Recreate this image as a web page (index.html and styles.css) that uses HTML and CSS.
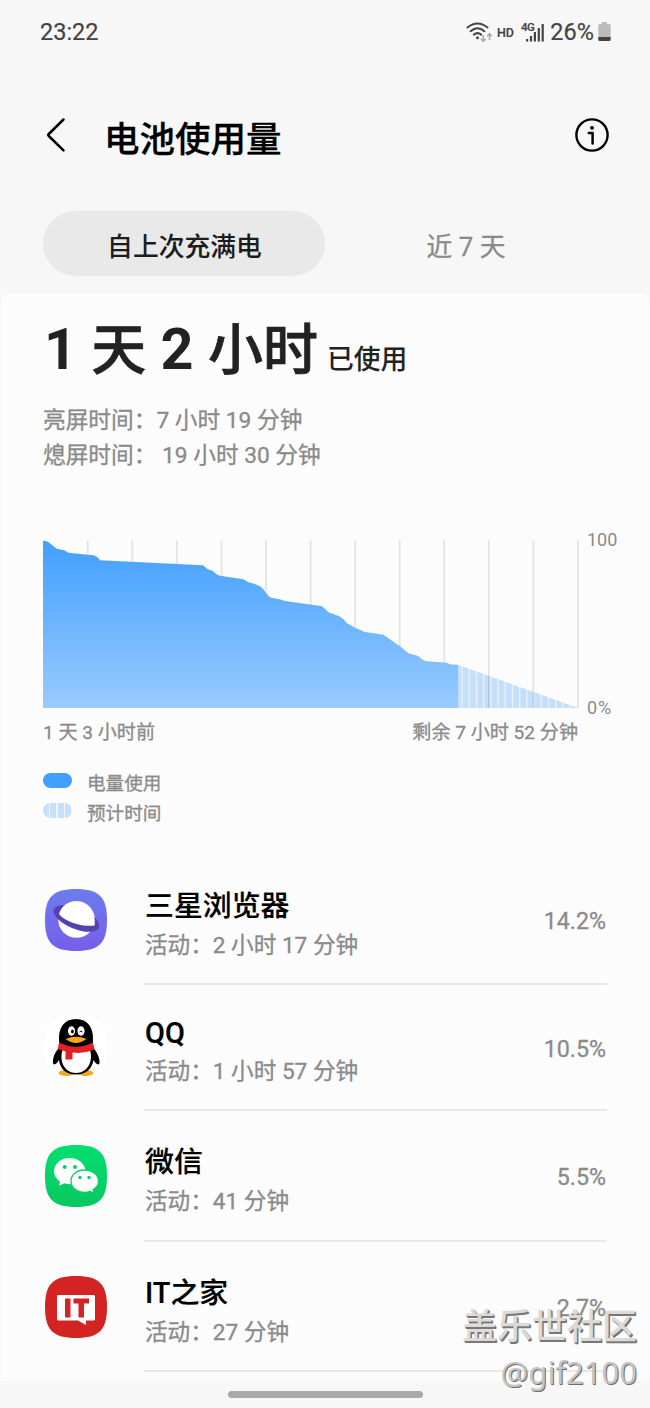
FILE: index.html
```
<!DOCTYPE html>
<html lang="zh-CN">
<head>
    <meta charset="UTF-8">
    <meta name="viewport" content="width=device-width, initial-scale=1.0">
    <title>电池使用量</title>
    <link rel="stylesheet" href="styles.css">
</head>
<body>
    <div class="status-bar">
        <span class="clock">23:22</span>
        <div class="status-icons">
            <svg class="wifi" width="27" height="22" viewBox="0 0 27 22">
                <g fill="none" stroke="#444" stroke-width="2" stroke-linecap="round">
                    <path d="M1.5 6.5Q11.5-1.5 21.5 6.5"/>
                    <path d="M4.6 10.2Q11.5 4.4 18.4 10.2"/>
                    <path d="M7.8 13.6Q11.5 10.6 15.2 13.6"/>
                </g>
                <circle cx="11.5" cy="16.8" r="1.5" fill="#444"/>
                <path d="M17.3 14v6M14.9 17.8l2.4 2.6 2.4-2.6M23.5 19v-6M21.1 15.2l2.4-2.6 2.4 2.6" fill="none" stroke="#aaa" stroke-width="1.5"/>
            </svg>
            <span class="hd">HD</span>
            <span class="net">4G</span>
            <svg class="signal" width="18" height="18" viewBox="0 0 18 18" fill="#444">
                <rect x="0" y="15" width="2.2" height="2.5"/>
                <rect x="3.9" y="12" width="2.2" height="5.5"/>
                <rect x="7.8" y="8" width="2.2" height="9.5"/>
                <rect x="11.7" y="4" width="2.2" height="13.5"/>
                <rect x="15.6" y="0" width="2.2" height="17.5"/>
            </svg>
            <span class="percent">26%</span>
            <svg class="battery" width="13" height="20" viewBox="0 0 13 20">
                <path d="M4 0h5v2h2q1.7 0 1.7 1.7V15H.3V3.7Q.3 2 2 2h2z" fill="#bbb"/>
                <path d="M.3 15h12.4v2.5q0 1.5-1.5 1.5H1.8Q.3 19 .3 17.5z" fill="#444"/>
            </svg>
        </div>
    </div>

    <header class="header">
        <svg class="back" width="20" height="36" viewBox="0 0 20 36">
            <path d="M17.5 2.5L2.8 17q-1 1 0 2L17.5 33.3" fill="none" stroke="#000" stroke-width="2.5" stroke-linecap="round"/>
        </svg>
        <h1>电池使用量</h1>
        <svg class="info" width="34" height="34" viewBox="0 0 34 34">
            <circle cx="17" cy="17" r="15.6" fill="none" stroke="#000" stroke-width="2.4"/>
            <circle cx="17" cy="9.8" r="1.9"/>
            <path d="M13.8 15h3.8v10.6" fill="none" stroke="#000" stroke-width="2.5" stroke-linecap="round" stroke-linejoin="round"/>
        </svg>
    </header>

    <nav class="tabs">
        <a class="tab active">自上次充满电</a>
        <a class="tab">近 7 天</a>
    </nav>

    <main class="card">
        <p class="total"><span class="big"><b>1 </b>天<b> 2 </b>小时</span><span class="used">已使用</span></p>
        <p class="screen-time">亮屏时间：7 小时 19 分钟</p>
        <p class="screen-time">熄屏时间：&nbsp;19 小时 30 分钟</p>

        <div class="chart">
            <svg width="537" height="170" viewBox="0 0 537 170">
                <defs>
                    <linearGradient id="used" x1="0" y1="0" x2="0" y2="1">
                        <stop offset="0" stop-color="#429fff"/>
                        <stop offset="1" stop-color="#99cbff"/>
                    </linearGradient>
                    <pattern id="stripes" x="418.4" y="0" width="7.2" height="170" patternUnits="userSpaceOnUse">
                        <rect width="7.2" height="170" fill="#eaf3fd"/>
                        <rect x="1.3" width="5.9" height="170" fill="#c5def9"/>
                    </pattern>
                </defs>
                <path d="M415 124.7L535 168H415z" fill="url(#stripes)"/>
                <path d="M44.8 .5V168M89.4 .5V168M133.9 .5V168M178.5 .5V168M223 .5V168M267.6 .5V168M312.2 .5V168M356.7 .5V168M401.3 .5V168M445.8 .5V168M490.4 .5V168M535 .5V168" stroke="#000" stroke-opacity=".1" stroke-width="1.7"/>
                <path class="level" d="M0 .7Q3 .7 5.3 2L13.7 8.7 21.3 10.3 25.3 12.7 50 15.3Q54 16 57 20.3L160 25.3 164.3 29 169.7 30.7Q174 35 177 35.7L200.3 39.3 205.3 42.3Q212 43.5 217 46.3Q220 48.5 223 52.7Q226 57 228.5 57.7L238.7 59.7 242 61 278 66Q280 66.5 283.5 70.5Q286 73 288 73.3L296.3 76.3Q300 78 303.7 83L312 87.7 322 92 340.3 94.7 357 106.3 365.3 113.3 375.3 116Q380 121 384 121.3L403.7 122.7 407.7 124.5 415 124.7V168H0z" fill="url(#used)"/>
            </svg>
            <div class="scale">
                <span>100</span>
                <span class="zero">0%</span>
            </div>
        </div>
        <div class="axis">
            <span>1 天 3 小时前</span>
            <span>剩余 7 小时 52 分钟</span>
        </div>

        <ul class="legend">
            <li><i class="swatch"></i>电量使用</li>
            <li><i class="swatch estimated"></i>预计时间</li>
        </ul>

        <ul class="apps">
            <li class="app browser">
                <svg class="icon" width="62" height="62" viewBox="0 0 62 62">
                    <defs>
                        <linearGradient id="violet" x1="0" y1="0" x2="0" y2="1">
                            <stop offset="0" stop-color="#6c7ced"/>
                            <stop offset="1" stop-color="#775ee9"/>
                        </linearGradient>
                    </defs>
                    <path d="M31 0C54 0 62 8 62 31S54 62 31 62 0 54 0 31 8 0 31 0z" fill="url(#violet)"/>
                    <circle cx="31.5" cy="30.5" r="18.3" fill="#fff"/>
                    <ellipse cx="31.5" cy="29.5" rx="24.3" ry="10.5" fill="#5641b2" transform="rotate(22 31.5 29.5)"/>
                    <path d="M14.2 24.5C14 28 31 38.7 49.5 36.5C51.5 26 44 12.2 31.5 12.2C22 12.2 16 18 14.2 24.5z" fill="#fff"/>
                </svg>
                <div class="app-text">
                    <h2>三星浏览器</h2>
                    <p>活动：2 小时 17 分钟</p>
                </div>
                <span class="share">14.2%</span>
            </li>
            <li class="app qq">
                <svg class="icon" width="62" height="62" viewBox="0 0 62 62">
                    <path d="M31 0C54 0 62 8 62 31S54 62 31 62 0 54 0 31 8 0 31 0z" fill="#fff"/>
                    <ellipse cx="21.5" cy="57" rx="8" ry="3" fill="#f5a81c"/>
                    <ellipse cx="40.5" cy="57" rx="8" ry="3" fill="#f5a81c"/>
                    <path d="M31 3C19 3 13.5 12 14 23.5L14.5 31C10 36 7.5 42 8 47C8.5 50 12 48 14 44C15 53 21 58.5 31 58.5S47 53 48.5 44C50.5 48 54 50 54.5 47C55 42 52 36 47.8 31L48 23.5C48.500 12 43 3 31 3z"/>
                    <path d="M18 33H44.5C49 44 43 57 31 57S13.5 44 18 33z" fill="#fff"/>
                    <path d="M14 26.5Q31 35 48 26.5L49.5 33.5Q39 38 27.5 36.5V43.5H20.5L20.5 35.5 12.8 33z" fill="#e51f26"/>
                    <ellipse cx="26.5" cy="15" rx="3.6" ry="4.7" fill="#fff"/>
                    <ellipse cx="36" cy="15" rx="3.6" ry="4.7" fill="#fff"/>
                    <ellipse cx="27.4" cy="15.5" rx="1.4" ry="2"/>
                    <path d="M34.5 16q1.5-2 3 0" fill="none" stroke="#000"/>
                    <path d="M20.5 23Q31 18.5 41.5 23Q36 27 31 27T20.5 23z" fill="#f5a81c"/>
                </svg>
                <div class="app-text">
                    <h2>QQ</h2>
                    <p>活动：1 小时 57 分钟</p>
                </div>
                <span class="share">10.5%</span>
            </li>
            <li class="app">
                <svg class="icon" width="62" height="62" viewBox="0 0 62 62">
                    <defs>
                        <linearGradient id="green" x1="0" y1="0" x2="0" y2="1">
                            <stop offset="0" stop-color="#06df70"/>
                            <stop offset="1" stop-color="#08c75f"/>
                        </linearGradient>
                    </defs>
                    <path d="M31 0C54 0 62 8 62 31S54 62 31 62 0 54 0 31 8 0 31 0z" fill="url(#green)"/>
                    <path d="M24.5 13C15.5 13 9 19 9 26.3C9 30.5 11.5 34 15 36.5L14.2 40.8 19.3 38.3Q22 39.3 25 39.3C34 39.3 40.5 33.5 40.5 26.3S33.5 13 24.5 13z" fill="#fff"/>
                    <path d="M39.5 25C31.5 25 26 30 26 36.2S31.5 47.3 39.5 47.3Q42.5 47.3 45 46.3L49 48.3 48.2 44.5C51.5 42.5 53.5 39.6 53.5 36.2C53.5 30 47.5 25 39.5 25z" fill="#fff" stroke="#08d066" stroke-width="1.3"/>
                    <g fill="#08d066">
                        <circle cx="19.7" cy="22" r="2"/>
                        <circle cx="30" cy="22" r="2"/>
                        <circle cx="35" cy="32.5" r="1.7"/>
                        <circle cx="44" cy="32.5" r="1.7"/>
                    </g>
                </svg>
                <div class="app-text">
                    <h2>微信</h2>
                    <p>活动：41 分钟</p>
                </div>
                <span class="share">5.5%</span>
            </li>
            <li class="app">
                <svg class="icon" width="62" height="62" viewBox="0 0 62 62">
                    <path d="M31 0C54 0 62 8 62 31S54 62 31 62 0 54 0 31 8 0 31 0z" fill="#d32323"/>
                    <path d="M13 19H48.5Q50 19 50 20.5V43Q50 44.5 48.5 44.5H41V49L33 44.5H13.5Q12 44.5 12 43V20.5Q12 19 13 19z" fill="#fff"/>
                    <path d="M20 22.5h5.5v19H20zM28.5 22.5H44V27.500H39V41.5H33.5V27.5H28.5z" fill="#d32323"/>
                </svg>
                <div class="app-text">
                    <h2>IT之家</h2>
                    <p>活动：27 分钟</p>
                </div>
                <span class="share">2.7%</span>
            </li>
        </ul>
    </main>

    <footer class="nav-bar"><span class="handle"></span></footer>

    <div class="watermark">
        <p class="community">盖乐世社区</p>
        <p class="author">@gif2100</p>
    </div>
</body>
</html>
```

FILE: styles.css
```
* {
    box-sizing: border-box;
    margin: 0;
    padding: 0;
}

body {
    position: relative;
    width: 650px;
    height: 1408px;
    overflow: hidden;
    background-color: #f7f7f7;
    color: #000;
    font-family: Roboto, "Noto Sans CJK SC", sans-serif;
    display: flex;
    flex-direction: column;
}

ul {
    list-style: none;
}

svg {
    display: block;
    flex-shrink: 0;
}

/* Status bar */
.status-bar {
    height: 64px;
    padding: 0 39px 0 40px;
    display: flex;
    justify-content: space-between;
    align-items: center;
    color: #444;
    font-size: 23.5px;
    -webkit-text-stroke: 0.2px #444;
}

.status-icons {
    display: flex;
    align-items: center;
}

.hd {
    margin-left: 4px;
    font-size: 12.5px;
    font-weight: 500;
}

.net {
    margin: -11px 0 0 7px;
    font-size: 11.5px;
    font-weight: 500;
    letter-spacing: -0.5px;
}

.signal {
    margin: 2px 0 0 -8px;
}

.percent {
    margin-left: 6px;
}

.battery {
    margin-left: 4px;
}

/* Title */
.header {
    height: 147px;
    padding: 0 41px 0 46px;
    display: flex;
    align-items: flex-start;
}

.back {
    margin-top: 53px;
}

.header h1 {
    flex: 1;
    margin: 54px 0 0 38px;
    font-size: 35.5px;
    line-height: 44px;
    font-weight: 500;
    -webkit-text-stroke: 0.3px #000;
}

.info {
    margin-top: 54px;
}

/* Tabs */
.tabs {
    height: 83px;
    padding: 0 43px;
    display: flex;
}

.tab {
    width: 282px;
    height: 65px;
    border-radius: 33px;
    color: #8a8a8a;
    font-size: 25.8px;
    line-height: 72px;
    text-align: center;
    -webkit-text-stroke: 0.3px #8a8a8a;
}

.tab.active {
    padding-left: 1px;
    background-color: #e9e9e9;
    color: #1c1c1c;
    font-weight: 500;
    -webkit-text-stroke: 0;
}

/* Content */
.card {
    height: 1087px;
    margin: 0 1px;
    padding: 20px 42px 0;
    border-radius: 6px 6px 0 0;
    background-color: #fcfcfc;
}

.total {
    height: 89px;
    color: #222;
    line-height: 72px;
    white-space: nowrap;
}

.big {
    margin-left: 1px;
    font-size: 55px;
    font-weight: 500;
    -webkit-text-stroke: 0.7px #222;
}

.big b {
    font-size: 57.5px;
    font-weight: 700;
    white-space: pre;
    -webkit-text-stroke: 0;
}

.used {
    margin-left: 9px;
    font-size: 26.8px;
    font-weight: 500;
}

.screen-time {
    height: 35px;
    color: #8a8a8a;
    font-size: 22.7px;
    line-height: 35px;
    -webkit-text-stroke: 0.3px #8a8a8a;
}

.chart {
    height: 170px;
    margin-top: 67px;
    display: flex;
    gap: 7px;
}

.scale {
    margin: -11px 0 -8px;
    display: flex;
    flex-direction: column;
    justify-content: space-between;
    color: #8a8a8a;
    font-size: 18px;
    line-height: 21px;
}

.zero {
    letter-spacing: 1px;
}

.axis {
    width: 535px;
    margin-top: 8px;
    display: flex;
    justify-content: space-between;
    color: #8a8a8a;
    font-size: 19.1px;
    line-height: 30px;
    -webkit-text-stroke: 0.3px #8a8a8a;
}

.legend {
    margin-top: 20px;
    color: #8a8a8a;
    font-size: 18.6px;
    line-height: 32px;
    -webkit-text-stroke: 0.3px #8a8a8a;
}

.legend li {
    height: 30px;
    display: flex;
    align-items: flex-start;
    gap: 15px;
}

.swatch {
    width: 29px;
    height: 15px;
    margin-top: 5px;
    border-radius: 8px;
    background-color: #429fff;
}

.swatch.estimated {
    background: repeating-linear-gradient(90deg, #c8dff9 0 6px, #eef5fd 6px 7.3px);
}

/* App list */
.apps {
    margin-top: 29px;
    padding: 0 0 0 2px;
}

.app {
    height: 130.5px;
    padding-top: 34px;
    display: flex;
}

.app.browser {
    height: 128px;
    padding-top: 32px;
}

.app.qq {
    height: 126px;
    padding-top: 31px;
}

.app-text {
    flex: 1;
    margin: -34px 0 0 37px;
    padding-top: 34px;
    border-bottom: 2px solid #e8e8e8;
}

.app-text h2 {
    padding-left: 1px;
    font-size: 28.9px;
    line-height: 34px;
    font-weight: 500;
    -webkit-text-stroke: 0.2px #000;
}

.app-text p {
    margin-top: 7px;
    padding-left: 1px;
    color: #8a8a8a;
    font-size: 22.6px;
    line-height: 31px;
    -webkit-text-stroke: 0.3px #8a8a8a;
}

.qq p {
    margin-top: 6px;
}

.share {
    margin-top: -34px;
    padding: 51px 1px 0 0;
    border-bottom: 2px solid #e8e8e8;
    color: #8a8a8a;
    font-size: 23.2px;
    line-height: 31px;
    -webkit-text-stroke: 0.3px #8a8a8a;
}

.qq .share {
    padding-top: 52px;
}

/* Gesture bar */
.nav-bar {
    height: 27px;
    display: flex;
    justify-content: center;
    align-items: center;
}

.handle {
    width: 195px;
    height: 7px;
    border-radius: 4px;
    background-color: #a9a9a9;
}

/* Watermark laid over the list */
.watermark {
    position: absolute;
    right: 13px;
    bottom: 14px;
    color: #dcd9d7;
    text-align: right;
}

.community {
    font-size: 35px;
    line-height: 46px;
    font-weight: 500;
    text-shadow: 1px 1px 0 #777, 1.5px 1.5px 0 #777;
}

.author {
    color: #c4c4c4;
    font-family: "Noto Sans", sans-serif;
    font-size: 31px;
    line-height: 43px;
    text-shadow: 1px 1px 0 #6c6c6c;
}
```
